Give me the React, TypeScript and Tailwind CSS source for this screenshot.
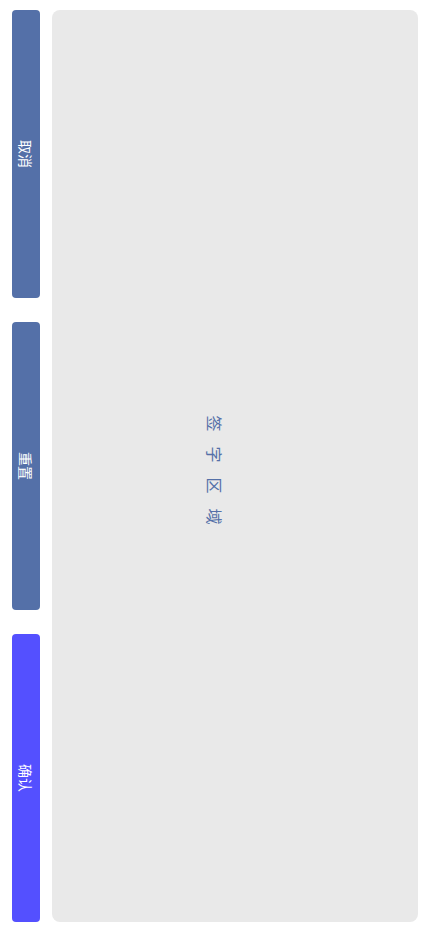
import React from "react";

export default function App() {
  const font = { fontFamily: '"Noto Sans CJK SC", "Noto Sans", sans-serif' };
  return (
    <div className="w-[430px] h-[932px] bg-white flex gap-[12px] px-[12px] py-[10px]" style={font}>
      <div className="w-[28px] flex flex-col gap-[24px]">
        {[
          { t: "取消", c: "bg-[#5470a8]" },
          { t: "重置", c: "bg-[#5470a8]" },
          { t: "确认", c: "bg-[#5450ff]" },
        ].map((b) => (
          <div key={b.t} className={`flex-1 rounded-[4px] ${b.c} flex items-center justify-center`}>
            <span className="rotate-90 whitespace-nowrap text-white text-[14px] leading-none">{b.t}</span>
          </div>
        ))}
      </div>
      <div className="flex-1 rounded-[8px] bg-[#e9e9e9] flex items-center justify-center">
        <span className="rotate-90 whitespace-nowrap text-[#5470a8] text-[16px] leading-none tracking-[15px] -translate-x-[20px] translate-y-[4px] pl-[15px]">
          签字区域
        </span>
      </div>
    </div>
  );
}
